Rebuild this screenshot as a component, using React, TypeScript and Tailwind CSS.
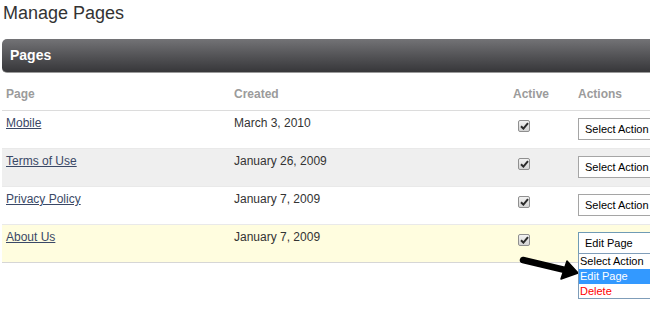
import React from "react";

type PageRow = {
  title: string;
  created: string;
  bg: string;
  open?: boolean;
};

const rows: PageRow[] = [
  { title: "Mobile", created: "March 3, 2010", bg: "bg-white" },
  { title: "Terms of Use", created: "January 26, 2009", bg: "bg-[#efefef]" },
  { title: "Privacy Policy", created: "January 7, 2009", bg: "bg-white" },
  { title: "About Us", created: "January 7, 2009", bg: "bg-[#fffddf]", open: true },
];

function CheckBox() {
  return (
    <div className="flex h-[12px] w-[12px] items-center justify-center rounded-[2px] border border-[#8f8f8f] bg-gradient-to-b from-[#f2f2f2] to-[#d4d4d4]">
      <svg width="9" height="8" viewBox="0 0 9 8">
        <path d="M1 4.2 L3.4 6.6 L8 1.2" fill="none" stroke="#2b2b2b" strokeWidth="2" />
      </svg>
    </div>
  );
}

function ActionSelect({ open }: { open?: boolean }) {
  return (
    <div className="relative">
      <div
        className={
          "flex h-[22px] w-[110px] items-center border bg-white pl-[6px] text-[11px] text-black " +
          (open ? "border-[#6f9bb5]" : "border-[#a5a5a5]")
        }
      >
        {open ? "Edit Page" : "Select Action"}
      </div>
      {open && (
        <div className="absolute left-0 top-[21px] z-10 flex w-[110px] flex-col border border-[#7f9db9] bg-white text-[11px] leading-[15px]">
          <div className="h-[15px] pl-[1px] text-black">Select Action</div>
          <div className="h-[15px] bg-[#3399ff] pl-[1px] text-white">Edit Page</div>
          <div className="h-[14px] pl-[1px] text-[#ff0000]">Delete</div>
        </div>
      )}
    </div>
  );
}

export default function App() {
  return (
    <div
      className="relative h-[321px] w-[650px] overflow-hidden bg-white text-[#333]"
      style={{ fontFamily: '"Liberation Sans", Arial, sans-serif' }}
    >
      <div className="w-[740px]">
        <h1 className="pl-[3px] pt-[3px] text-[18px] leading-[20px] text-[#333]">Manage Pages</h1>

        <div className="ml-[2px] mt-[16px] flex h-[34px] items-center rounded-[5px] border-b border-[#9a9a9a] bg-gradient-to-b from-[#737376] to-[#37373a] pl-[8px]">
          <span className="text-[14px] font-bold text-white">Pages</span>
        </div>

        <div className="ml-[2px] flex h-[38px] border-b border-[#dcdcdc] pt-[14px] text-[12px] font-bold leading-[14px] text-[#9b9b9b]">
          <div className="w-[228px] pl-[4px]">Page</div>
          <div className="w-[279px] pl-[4px]">Created</div>
          <div className="w-[65px] pl-[4px]">Active</div>
          <div className="pl-[4px]">Actions</div>
        </div>

        {rows.map((r, i) => (
          <div
            key={r.title}
            className={
              "ml-[2px] flex h-[38px] border-b text-[12px] leading-[14px] " +
              r.bg +
              (i === rows.length - 1 ? " border-[#d6d6d6]" : " border-[#e9e9e9]")
            }
          >
            <div className="w-[228px] pl-[4px] pt-[5px]">
              <a href="#" className="text-[#3a4866] underline">
                {r.title}
              </a>
            </div>
            <div className="w-[279px] pl-[4px] pt-[5px] text-[#333]">{r.created}</div>
            <div className="w-[65px] pl-[9px] pt-[9px]">
              <CheckBox />
            </div>
            <div className="pl-[4px] pt-[7px]">
              <ActionSelect open={r.open} />
            </div>
          </div>
        ))}
      </div>

      <svg className="absolute left-[515px] top-[252px]" width="70" height="35" viewBox="0 0 70 35">
        <line x1="8" y1="8" x2="50" y2="18" stroke="#000" strokeWidth="6.5" strokeLinecap="round" />
        <polygon points="63,21 52,9 46,27" fill="#000" stroke="#000" strokeWidth="1.5" strokeLinejoin="round" />
      </svg>
    </div>
  );
}
